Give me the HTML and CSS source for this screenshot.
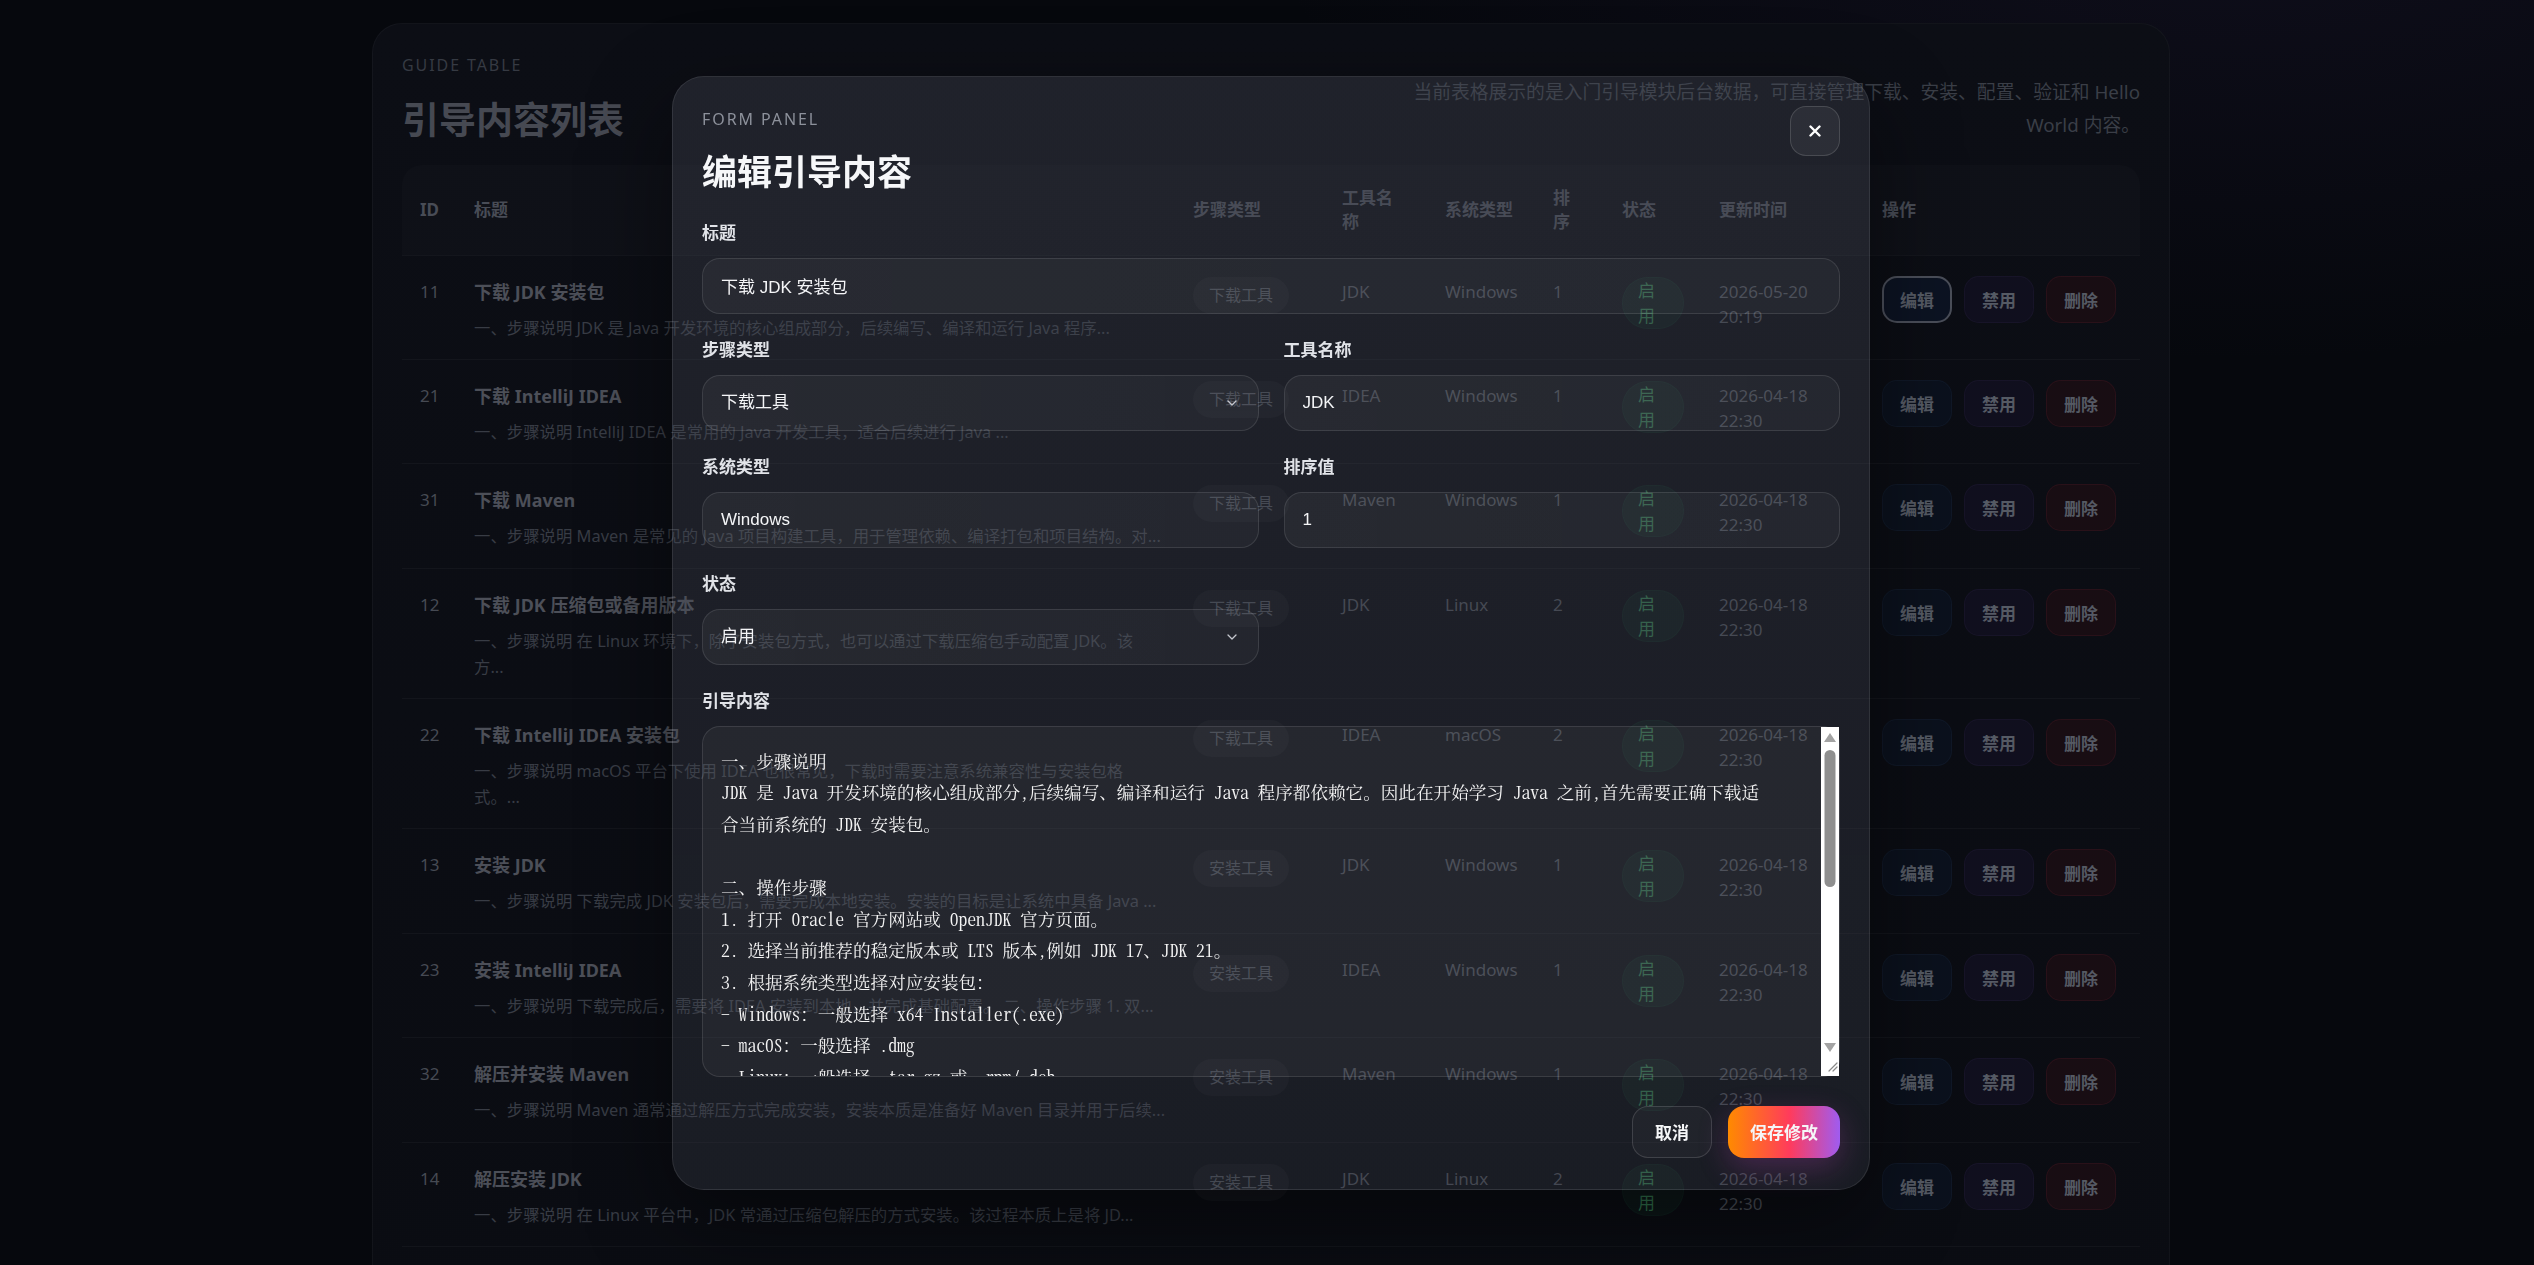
FILE: index.html
```html
<!DOCTYPE html>
<html lang="zh-CN">
<head>
<meta charset="utf-8">
<title>引导内容列表</title>
<link rel="stylesheet" href="styles.css">
</head>
<body>
<main class="page">
  <section class="card">
    <header class="card-head">
      <div class="head-left">
        <p class="eyebrow">GUIDE TABLE</p>
        <h1 class="page-title">引导内容列表</h1>
      </div>
      <p class="head-desc">当前表格展示的是入门引导模块后台数据，可直接管理下载、安装、配置、验证和 Hello World 内容。</p>
    </header>
    <div class="table-wrap">
      <table class="guide-table">
        <colgroup>
          <col class="w-id"><col class="w-title"><col class="w-step"><col class="w-tool"><col class="w-os"><col class="w-sort"><col class="w-status"><col class="w-time"><col class="w-ops">
        </colgroup>
        <thead>
          <tr><th>ID</th><th>标题</th><th>步骤类型</th><th>工具名称</th><th>系统类型</th><th>排序</th><th>状态</th><th>更新时间</th><th>操作</th></tr>
        </thead>
        <tbody>
          <tr>
            <td>11</td>
            <td><div class="row-title">下载 JDK 安装包</div><div class="row-desc">一、步骤说明 JDK 是 Java 开发环境的核心组成部分，后续编写、编译和运行 Java 程序...</div></td>
            <td><span class="tag">下载工具</span></td><td>JDK</td><td>Windows</td><td>1</td>
            <td><span class="status">启用</span></td><td>2026-05-20 20:19</td>
            <td><div class="actions"><button class="act act-edit is-focus">编辑</button><button class="act act-ban">禁用</button><button class="act act-del">删除</button></div></td>
          </tr>
          <tr>
            <td>21</td>
            <td><div class="row-title">下载 IntelliJ IDEA</div><div class="row-desc">一、步骤说明 IntelliJ IDEA 是常用的 Java 开发工具，适合后续进行 Java ...</div></td>
            <td><span class="tag">下载工具</span></td><td>IDEA</td><td>Windows</td><td>1</td>
            <td><span class="status">启用</span></td><td>2026-04-18 22:30</td>
            <td><div class="actions"><button class="act act-edit">编辑</button><button class="act act-ban">禁用</button><button class="act act-del">删除</button></div></td>
          </tr>
          <tr>
            <td>31</td>
            <td><div class="row-title">下载 Maven</div><div class="row-desc">一、步骤说明 Maven 是常见的 Java 项目构建工具，用于管理依赖、编译打包和项目结构。对...</div></td>
            <td><span class="tag">下载工具</span></td><td>Maven</td><td>Windows</td><td>1</td>
            <td><span class="status">启用</span></td><td>2026-04-18 22:30</td>
            <td><div class="actions"><button class="act act-edit">编辑</button><button class="act act-ban">禁用</button><button class="act act-del">删除</button></div></td>
          </tr>
          <tr>
            <td>12</td>
            <td><div class="row-title">下载 JDK 压缩包或备用版本</div><div class="row-desc">一、步骤说明 在 Linux 环境下，除了安装包方式，也可以通过下载压缩包手动配置 JDK。该<br>方...</div></td>
            <td><span class="tag">下载工具</span></td><td>JDK</td><td>Linux</td><td>2</td>
            <td><span class="status">启用</span></td><td>2026-04-18 22:30</td>
            <td><div class="actions"><button class="act act-edit">编辑</button><button class="act act-ban">禁用</button><button class="act act-del">删除</button></div></td>
          </tr>
          <tr>
            <td>22</td>
            <td><div class="row-title">下载 IntelliJ IDEA 安装包</div><div class="row-desc">一、步骤说明 macOS 平台下使用 IDEA 也很常见，下载时需要注意系统兼容性与安装包格<br>式。...</div></td>
            <td><span class="tag">下载工具</span></td><td>IDEA</td><td>macOS</td><td>2</td>
            <td><span class="status">启用</span></td><td>2026-04-18 22:30</td>
            <td><div class="actions"><button class="act act-edit">编辑</button><button class="act act-ban">禁用</button><button class="act act-del">删除</button></div></td>
          </tr>
          <tr>
            <td>13</td>
            <td><div class="row-title">安装 JDK</div><div class="row-desc">一、步骤说明 下载完成 JDK 安装包后，需要完成本地安装。安装的目标是让系统中具备 Java ...</div></td>
            <td><span class="tag">安装工具</span></td><td>JDK</td><td>Windows</td><td>1</td>
            <td><span class="status">启用</span></td><td>2026-04-18 22:30</td>
            <td><div class="actions"><button class="act act-edit">编辑</button><button class="act act-ban">禁用</button><button class="act act-del">删除</button></div></td>
          </tr>
          <tr>
            <td>23</td>
            <td><div class="row-title">安装 IntelliJ IDEA</div><div class="row-desc">一、步骤说明 下载完成后，需要将 IDEA 安装到本地，并完成基础配置。 二、操作步骤 1. 双...</div></td>
            <td><span class="tag">安装工具</span></td><td>IDEA</td><td>Windows</td><td>1</td>
            <td><span class="status">启用</span></td><td>2026-04-18 22:30</td>
            <td><div class="actions"><button class="act act-edit">编辑</button><button class="act act-ban">禁用</button><button class="act act-del">删除</button></div></td>
          </tr>
          <tr>
            <td>32</td>
            <td><div class="row-title">解压并安装 Maven</div><div class="row-desc">一、步骤说明 Maven 通常通过解压方式完成安装，安装本质是准备好 Maven 目录并用于后续...</div></td>
            <td><span class="tag">安装工具</span></td><td>Maven</td><td>Windows</td><td>1</td>
            <td><span class="status">启用</span></td><td>2026-04-18 22:30</td>
            <td><div class="actions"><button class="act act-edit">编辑</button><button class="act act-ban">禁用</button><button class="act act-del">删除</button></div></td>
          </tr>
          <tr>
            <td>14</td>
            <td><div class="row-title">解压安装 JDK</div><div class="row-desc">一、步骤说明 在 Linux 平台中，JDK 常通过压缩包解压的方式安装。该过程本质上是将 JD...</div></td>
            <td><span class="tag">安装工具</span></td><td>JDK</td><td>Linux</td><td>2</td>
            <td><span class="status">启用</span></td><td>2026-04-18 22:30</td>
            <td><div class="actions"><button class="act act-edit">编辑</button><button class="act act-ban">禁用</button><button class="act act-del">删除</button></div></td>
          </tr>
          <tr>
            <td>24</td>
            <td><div class="row-title">安装 IntelliJ IDEA（macOS）</div><div class="row-desc">一、步骤说明 macOS 下安装 IDEA 通常只需将应用拖入应用程序目录...</div></td>
            <td><span class="tag">安装工具</span></td><td>IDEA</td><td>macOS</td><td>2</td>
            <td><span class="status">启用</span></td><td>2026-04-18 22:30</td>
            <td><div class="actions"><button class="act act-edit">编辑</button><button class="act act-ban">禁用</button><button class="act act-del">删除</button></div></td>
          </tr>
        </tbody>
      </table>
    </div>
  </section>
</main>

<div class="overlay">
  <div class="modal">
    <div class="modal-head">
      <div>
        <p class="modal-eyebrow">FORM PANEL</p>
        <h2 class="modal-title">编辑引导内容</h2>
      </div>
      <button class="close" aria-label="关闭">
        <svg width="12" height="12" viewBox="0 0 12 12"><path d="M1.5 1.5 L10.5 10.5 M10.5 1.5 L1.5 10.5" stroke="#ffffff" stroke-width="2.4" stroke-linecap="round"/></svg>
      </button>
    </div>
    <form class="form">
      <div class="field full">
        <label class="label">标题</label>
        <input class="control" type="text" value="下载 JDK 安装包">
      </div>
      <div class="field">
        <label class="label">步骤类型</label>
        <div class="select-wrap">
          <select class="control"><option>下载工具</option><option>安装工具</option></select>
          <svg class="chev" width="10" height="6" viewBox="0 0 10 6"><path d="M1 1 L5 5 L9 1" fill="none" stroke="#c4c7ce" stroke-width="1.3" stroke-linecap="round" stroke-linejoin="round"/></svg>
        </div>
      </div>
      <div class="field">
        <label class="label">工具名称</label>
        <input class="control" type="text" value="JDK">
      </div>
      <div class="field">
        <label class="label">系统类型</label>
        <input class="control" type="text" value="Windows">
      </div>
      <div class="field">
        <label class="label">排序值</label>
        <input class="control" type="text" value="1">
      </div>
      <div class="field">
        <label class="label">状态</label>
        <div class="select-wrap">
          <select class="control"><option>启用</option><option>禁用</option></select>
          <svg class="chev" width="10" height="6" viewBox="0 0 10 6"><path d="M1 1 L5 5 L9 1" fill="none" stroke="#c4c7ce" stroke-width="1.3" stroke-linecap="round" stroke-linejoin="round"/></svg>
        </div>
      </div>
      <div class="field full">
        <label class="label">引导内容</label>
        <div class="area-wrap">
          <textarea class="control area">一、步骤说明
JDK 是 Java 开发环境的核心组成部分，后续编写、编译和运行 Java 程序都依赖它。因此在开始学习 Java 之前，首先需要正确下载适合当前系统的 JDK 安装包。

二、操作步骤
1. 打开 Oracle 官方网站或 OpenJDK 官方页面。
2. 选择当前推荐的稳定版本或 LTS 版本，例如 JDK 17、JDK 21。
3. 根据系统类型选择对应安装包：
- Windows：一般选择 x64 Installer（.exe）
- macOS：一般选择 .dmg
- Linux：一般选择 .tar.gz 或 .rpm/.deb
4. 下载完成后，记住安装包的保存位置，便于后续安装。

三、注意事项
1. 建议优先选择 LTS 长期支持版本，稳定性更好。
2. 注意区分 x64 与 ARM 架构，避免下载错误的安装包。
3. 如果官网访问较慢，可以选择国内镜像站点下载。

四、验证方式
下载完成后，可以查看安装包文件名中是否包含正确的版本号与系统类型。

五、常见问题
1. 下载页面需要登录：Oracle 部分版本需要账号登录，可改用 OpenJDK。
2. 不确定系统位数：可在系统设置中查看处理器架构。</textarea>
          <svg class="fake-scroll" width="18" height="349" viewBox="0 0 18 349" aria-hidden="true">
            <rect x="0" y="0" width="18" height="349" fill="#ffffff"/>
            <polygon points="9,6 3,15 15,15" fill="#a3a3a3"/>
            <rect x="3.5" y="23" width="11" height="137" rx="5.5" fill="#8f8f8f"/>
            <polygon points="3,316 15,316 9,325" fill="#a3a3a3"/>
            <path d="M16 336 L8 344 M16 340 L12 344" stroke="#8a8a8a" stroke-width="1.2" stroke-linecap="round"/>
          </svg>
        </div>
      </div>
    </form>
    <div class="modal-foot">
      <button class="btn btn-ghost">取消</button>
      <button class="btn btn-primary">保存修改</button>
    </div>
  </div>
</div>
</body>
</html>
```

FILE: styles.css
```css
* { box-sizing: border-box; }

html, body {
  margin: 0;
  height: 100%;
  overflow: hidden;
}

body {
  background:
    radial-gradient(1400px 700px at 88% -10%, rgba(72, 52, 120, 0.14), transparent 70%),
    #06080d;
  font-family: "Noto Sans", "Noto Sans CJK SC", sans-serif;
  color: #474b54;
}

/* ---------- page card ---------- */
.page {
  padding: 23px 0 0 8px;
}

.card {
  width: 1798px;
  margin: 0 auto;
  padding: 29px 29px 40px;
  background: linear-gradient(180deg, #0c0e15 0%, #0a0c12 100%);
  border: 1px solid rgba(255, 255, 255, 0.035);
  border-radius: 30px;
}

.card-head {
  display: flex;
  justify-content: space-between;
  align-items: flex-end;
}

.eyebrow {
  margin: 0;
  font-size: 16px;
  line-height: 24px;
  letter-spacing: 0.12em;
  color: #363a43;
}

.page-title {
  margin: 19px 0 0;
  font-size: 37px;
  line-height: 48px;
  font-weight: 700;
  color: #464952;
}

.head-desc {
  margin: 0 0 2px;
  max-width: 750px;
  text-align: right;
  font-size: 18.8px;
  line-height: 33px;
  color: #3a3e47;
}

/* ---------- table ---------- */
.table-wrap {
  margin-top: 21px;
  border-radius: 20px;
  overflow: hidden;
}

.guide-table {
  width: 1738px;
  border-collapse: collapse;
  table-layout: fixed;
}

.w-id { width: 54px; }
.w-title { width: 719px; }
.w-step { width: 149px; }
.w-tool { width: 103px; }
.w-os { width: 108px; }
.w-sort { width: 69px; }
.w-status { width: 97px; }
.w-time { width: 163px; }
.w-ops { width: 276px; }

.guide-table th {
  height: 90px;
  padding: 0 18px;
  text-align: left;
  vertical-align: middle;
  font-size: 17px;
  line-height: 24px;
  font-weight: 700;
  color: #484c56;
  background: rgba(255, 255, 255, 0.014);
}

.guide-table td {
  padding: 23px 18px 18.4px;
  vertical-align: top;
  font-size: 17px;
  line-height: 25px;
  color: #464a53;
  border-top: 1px solid rgba(255, 255, 255, 0.035);
}

.row-title {
  font-size: 18px;
  line-height: 26px;
  font-weight: 700;
  color: #4c4f58;
}

.row-desc {
  margin-top: 10px;
  font-size: 16.4px;
  line-height: 26px;
  white-space: nowrap;
  color: #383c45;
}

.tag {
  display: inline-block;
  margin-top: -2px;
  padding: 6px 16px;
  font-size: 16px;
  line-height: 25px;
  border-radius: 999px;
  background: rgba(255, 255, 255, 0.03);
  color: #474b54;
}

.status {
  display: inline-block;
  width: 62px;
  margin-top: -2px;
  padding: 0 16px 0 15px;
  font-size: 17px;
  line-height: 25px;
  border-radius: 999px;
  background: rgba(46, 160, 96, 0.07);
  border: 1px solid rgba(60, 170, 110, 0.05);
  color: #2f6c49;
}

.actions {
  display: flex;
  gap: 12px;
  margin-top: -3px;
}

.act {
  width: 70px;
  height: 47px;
  padding: 0;
  border-radius: 15px;
  font-family: "Noto Sans", "Noto Sans CJK SC", sans-serif;
  font-size: 17px;
  font-weight: 700;
  color: #555a64;
  border: 1px solid transparent;
}

.act-edit { background: #0b111d; border-color: rgba(80, 110, 170, 0.08); }
.act-ban { background: #100f1e; border-color: rgba(110, 90, 170, 0.08); }
.act-del { background: #180d13; border-color: rgba(200, 60, 80, 0.1); }
.act-edit.is-focus { border: 2px solid #4a4e59; background: #0c1322; }

/* ---------- modal ---------- */
.overlay {
  position: fixed;
  inset: 0;
  display: flex;
  align-items: center;
  justify-content: center;
  padding-left: 8px;
}

.modal {
  width: 1198px;
  padding: 30px 29px 31px;
  border-radius: 32px;
  background: linear-gradient(180deg, rgba(74, 78, 90, 0.32) 0%, rgba(64, 67, 78, 0.3) 100%);
  border: 1px solid rgba(255, 255, 255, 0.09);
  box-shadow: 0 30px 90px rgba(0, 0, 0, 0.45);
}

.modal-head {
  display: flex;
  justify-content: space-between;
  align-items: flex-start;
}

.modal-eyebrow {
  margin: 0;
  font-size: 16px;
  line-height: 24px;
  letter-spacing: 0.12em;
  color: #8d919b;
}

.modal-title {
  margin: 18px 0 0;
  font-size: 35px;
  line-height: 46px;
  font-weight: 700;
  color: #f6f7f9;
}

.close {
  width: 50px;
  height: 50px;
  margin-top: -1px;
  display: flex;
  align-items: center;
  justify-content: center;
  border-radius: 16px;
  border: 1px solid rgba(255, 255, 255, 0.14);
  background: rgba(255, 255, 255, 0.06);
  padding: 0;
}

.form {
  margin: 25px 0 0;
  display: grid;
  grid-template-columns: 1fr 1fr;
  column-gap: 25px;
  row-gap: 23px;
}

.field.full { grid-column: 1 / -1; }

.label {
  display: block;
  margin-bottom: 12px;
  font-size: 17px;
  line-height: 26px;
  font-weight: 700;
  color: #e1e3e8;
}

.control {
  display: block;
  width: 100%;
  height: 56px;
  padding: 0 18px;
  border-radius: 18px;
  border: 1px solid rgba(255, 255, 255, 0.11);
  background: linear-gradient(90deg, rgba(255, 255, 255, 0.045), rgba(255, 255, 255, 0.03));
  color: #f4f5f7;
  font-family: "Liberation Sans", "Noto Sans CJK SC", sans-serif;
  font-size: 17px;
  outline: none;
  appearance: none;
  -webkit-appearance: none;
}

.select-wrap { position: relative; }

.chev {
  position: absolute;
  right: 22px;
  top: 25px;
  pointer-events: none;
}

.area-wrap { position: relative; }

.area {
  height: 351px;
  padding: 18px 72px 18px 18px;
  font-family: "Noto Serif CJK SC", serif;
  font-feature-settings: "hwid" 1;
  font-size: 17.6px;
  line-height: 1.8;
  resize: none;
  overflow: hidden;
  scrollbar-width: none;
  background: rgba(255, 255, 255, 0.04);
  color: #f4f4f4;
}

.fake-scroll {
  position: absolute;
  top: 1px;
  right: 1px;
  display: block;
}

.modal-foot {
  display: flex;
  justify-content: flex-end;
  gap: 16px;
  margin-top: 29px;
}

.btn {
  height: 52px;
  padding: 0 22px;
  border-radius: 16px;
  font-family: "Noto Sans", "Noto Sans CJK SC", sans-serif;
  font-size: 17px;
  font-weight: 700;
  color: #f5f6f8;
  border: none;
}

.btn-ghost {
  border: 1px solid rgba(255, 255, 255, 0.14);
  background: rgba(255, 255, 255, 0.03);
}

.btn-primary {
  background: linear-gradient(90deg, #ff8a00 0%, #ff3b5c 55%, #9f5cf0 100%);
  box-shadow: 0 10px 30px rgba(200, 70, 200, 0.25);
}
```
